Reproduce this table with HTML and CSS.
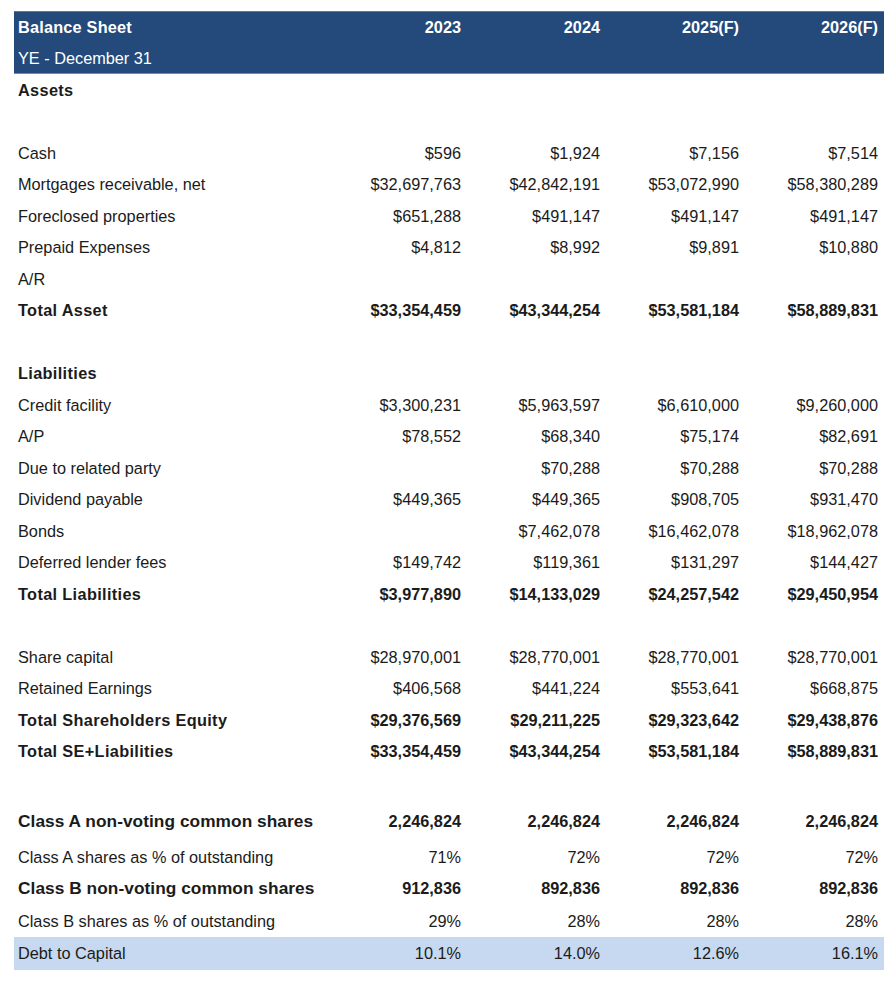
FILE: index.html
```html
<!DOCTYPE html>
<html lang="en">
<head>
<meta charset="utf-8">
<title>Balance Sheet</title>
<link rel="stylesheet" href="styles.css">
</head>
<body>
<div class="page">
<table class="bs">
  <colgroup>
    <col class="c-label"><col class="c-num"><col class="c-num"><col class="c-num"><col class="c-num">
  </colgroup>
  <thead>
    <tr class="hd hd-top"><th class="lbl">Balance Sheet</th><th>2023</th><th>2024</th><th>2025(F)</th><th>2026(F)</th></tr>
    <tr class="hd hd-sub"><td class="lbl">YE - December 31</td><td></td><td></td><td></td><td></td></tr>
  </thead>
  <tbody>
    <tr class="b"><td class="lbl">Assets</td><td></td><td></td><td></td><td></td></tr>
    <tr><td class="lbl">&nbsp;</td><td></td><td></td><td></td><td></td></tr>
    <tr><td class="lbl">Cash</td><td>$596</td><td>$1,924</td><td>$7,156</td><td>$7,514</td></tr>
    <tr><td class="lbl">Mortgages receivable, net</td><td>$32,697,763</td><td>$42,842,191</td><td>$53,072,990</td><td>$58,380,289</td></tr>
    <tr><td class="lbl">Foreclosed properties</td><td>$651,288</td><td>$491,147</td><td>$491,147</td><td>$491,147</td></tr>
    <tr><td class="lbl">Prepaid Expenses</td><td>$4,812</td><td>$8,992</td><td>$9,891</td><td>$10,880</td></tr>
    <tr><td class="lbl">A/R</td><td></td><td></td><td></td><td></td></tr>
    <tr class="b"><td class="lbl">Total Asset</td><td>$33,354,459</td><td>$43,344,254</td><td>$53,581,184</td><td>$58,889,831</td></tr>
    <tr><td class="lbl">&nbsp;</td><td></td><td></td><td></td><td></td></tr>
    <tr class="b"><td class="lbl">Liabilities</td><td></td><td></td><td></td><td></td></tr>
    <tr><td class="lbl">Credit facility</td><td>$3,300,231</td><td>$5,963,597</td><td>$6,610,000</td><td>$9,260,000</td></tr>
    <tr><td class="lbl">A/P</td><td>$78,552</td><td>$68,340</td><td>$75,174</td><td>$82,691</td></tr>
    <tr><td class="lbl">Due to related party</td><td></td><td>$70,288</td><td>$70,288</td><td>$70,288</td></tr>
    <tr><td class="lbl">Dividend payable</td><td>$449,365</td><td>$449,365</td><td>$908,705</td><td>$931,470</td></tr>
    <tr><td class="lbl">Bonds</td><td></td><td>$7,462,078</td><td>$16,462,078</td><td>$18,962,078</td></tr>
    <tr><td class="lbl">Deferred lender fees</td><td>$149,742</td><td>$119,361</td><td>$131,297</td><td>$144,427</td></tr>
    <tr class="b"><td class="lbl">Total Liabilities</td><td>$3,977,890</td><td>$14,133,029</td><td>$24,257,542</td><td>$29,450,954</td></tr>
    <tr><td class="lbl">&nbsp;</td><td></td><td></td><td></td><td></td></tr>
    <tr><td class="lbl">Share capital</td><td>$28,970,001</td><td>$28,770,001</td><td>$28,770,001</td><td>$28,770,001</td></tr>
    <tr><td class="lbl">Retained Earnings</td><td>$406,568</td><td>$441,224</td><td>$553,641</td><td>$668,875</td></tr>
    <tr class="b"><td class="lbl">Total Shareholders Equity</td><td>$29,376,569</td><td>$29,211,225</td><td>$29,323,642</td><td>$29,438,876</td></tr>
    <tr class="b"><td class="lbl">Total SE+Liabilities</td><td>$33,354,459</td><td>$43,344,254</td><td>$53,581,184</td><td>$58,889,831</td></tr>
    <tr class="gap"><td class="lbl">&nbsp;</td><td></td><td></td><td></td><td></td></tr>
    <tr class="b cls r-a"><td class="lbl">Class A non-voting common shares</td><td>2,246,824</td><td>2,246,824</td><td>2,246,824</td><td>2,246,824</td></tr>
    <tr class="r-ap"><td class="lbl">Class A shares as % of outstanding</td><td>71%</td><td>72%</td><td>72%</td><td>72%</td></tr>
    <tr class="b cls r-b"><td class="lbl">Class B non-voting common shares</td><td>912,836</td><td>892,836</td><td>892,836</td><td>892,836</td></tr>
    <tr class="r-bp"><td class="lbl">Class B shares as % of outstanding</td><td>29%</td><td>28%</td><td>28%</td><td>28%</td></tr>
    <tr class="hl"><td class="lbl">Debt to Capital</td><td>10.1%</td><td>14.0%</td><td>12.6%</td><td>16.1%</td></tr>
  </tbody>
</table>
</div>
</body>
</html>
```

FILE: styles.css
```css
html, body {
  margin: 0;
  padding: 0;
  background: #ffffff;
}

.page {
  padding: 11px 12px 0 14px;
}

.bs {
  border-collapse: collapse;
  table-layout: fixed;
  width: 870px;
  font-family: "Liberation Sans", Arial, sans-serif;
  font-size: 16.3px;
  color: #1b1b1b;
}

.c-label { width: 314px; }
.c-num { width: 139px; }

.bs th,
.bs td {
  height: 31.5px;
  padding: 0 6px 0 0;
  text-align: right;
  vertical-align: middle;
  white-space: nowrap;
  line-height: 18px;
  font-weight: normal;
}

.bs .lbl {
  text-align: left;
  padding-left: 4px;
}

.hd th,
.hd td {
  background: #234a7b;
  color: #ffffff;
}

.hd-top th {
  font-weight: bold;
  height: 30.6px;
  border-top: 1px solid #5b7aa3;
}

.hd-top th.lbl {
  letter-spacing: 0.2px;
}

.hd-sub td {
  height: 30.6px;
  border-bottom: 1px solid #6f8db3;
}

.b td {
  font-weight: bold;
}

.b td.lbl {
  letter-spacing: 0.35px;
}

.gap td { height: 33px; }
.r-a td { height: 41px; }
.r-ap td { height: 31px; }
.r-b td { height: 32px; }
.r-bp td { height: 33px; }

.cls td.lbl {
  font-size: 17.3px;
  letter-spacing: 0.05px;
}

.hl td {
  background: #c6d9f0;
  height: 32.5px;
}
```
